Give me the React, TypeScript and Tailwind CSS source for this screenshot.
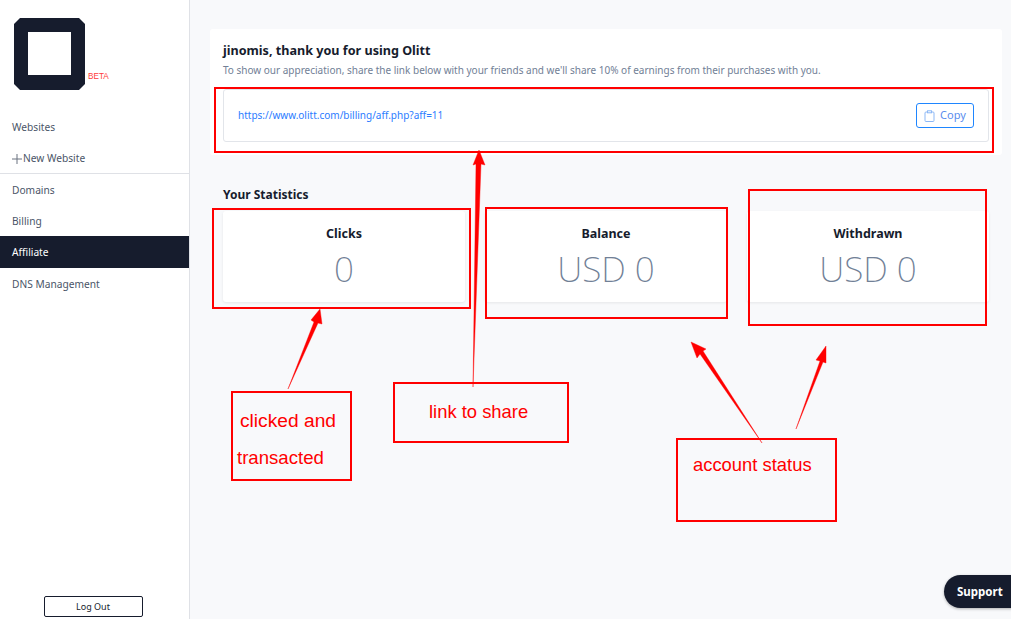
import React from "react";

const font = { fontFamily: '"Noto Sans", sans-serif' };

function Arrow({ points }: { points: string }) {
  return <polygon points={points} fill="#ff0000" stroke="#ff0000" strokeWidth="0.4" />;
}

function Stat({ title, value }: { title: string; value: string }) {
  return (
    <div className="h-[91px] rounded-[3px] bg-white shadow-[0_1px_3px_rgba(0,0,0,0.08)] flex flex-col items-center">
      <div className="mt-[14px] text-[12.5px] leading-[18px] font-bold text-[#161c2d]">{title}</div>
      <div className="mt-[2px] text-[35px] leading-[48px] font-extralight text-[#718096]">{value}</div>
    </div>
  );
}

function NavItem({ children, active, short }: { children: React.ReactNode; active?: boolean; short?: boolean }) {
  return (
    <div
      className={
        (short ? "h-[31px] " : "h-[32px] ") +
        "flex items-center pl-[12px] pt-[2px] text-[10.2px] " +
        (active ? "bg-[#161c2d] text-white" : "text-[#4a5568]")
      }
    >
      {children}
    </div>
  );
}

export default function App() {
  return (
    <div style={font} className="relative flex h-[619px] w-[1011px] overflow-hidden bg-[#f8f9fb]">
      <aside className="flex h-full w-[190px] shrink-0 flex-col border-r border-[#dfe1e6] bg-white">
        <div className="flex h-[111px] items-start pl-[14px] pt-[18px]">
          <svg width="72" height="72" viewBox="0 0 72 72">
            <polygon points="6,0 65,0 71,6 71,66 65,72 6,72 0,66 0,6" fill="#161c2d" />
            <rect x="14" y="14" width="43" height="43" fill="#ffffff" />
          </svg>
          <span
            style={{ fontFamily: '"Liberation Sans", sans-serif' }}
            className="mt-[54px] ml-[2px] text-[8.2px] leading-[10px] text-[#ff3b3b]"
          >
            BETA
          </span>
        </div>
        <NavItem>Websites</NavItem>
        <div className="h-[31px] flex items-center pl-[12px] pt-[2px] text-[10.2px] text-[#4a5568] border-b border-[#dfe1e6]">
          <svg width="10" height="10" viewBox="0 0 10 10" className="mr-[1px]">
            <path d="M5 0v10M0 5h10" stroke="#6b7280" strokeWidth="1" />
          </svg>
          New Website
        </div>
        <NavItem short>Domains</NavItem>
        <NavItem short>Billing</NavItem>
        <NavItem active>Affiliate</NavItem>
        <NavItem>DNS Management</NavItem>
        <div className="mt-auto mb-[2px] flex justify-center pr-[3px]">
          <button className="h-[21px] w-[99px] rounded-[2px] border border-[#161c2d] bg-white text-[9px] text-[#161c2d]">
            Log Out
          </button>
        </div>
      </aside>

      <main className="flex-1 pl-[20px] pr-[9px] pt-[29px]">
        <section className="h-[126px] rounded-[3px] bg-white px-[13px] pt-[13px]">
          <h1 className="text-[12.6px] leading-[18px] font-bold text-[#161c2d]">jinomis, thank you for using Olitt</h1>
          <p className="mt-[3px] text-[10px] leading-[14px] text-[#718096]">
            To show our appreciation, share the link below with your friends and we'll share 10% of earnings from their
            purchases with you.
          </p>
          <div className="mt-[12px] flex h-[53px] items-center justify-between rounded-[3px] border border-[#e2e5ea] pl-[14px] pr-[14px]">
            <a className="text-[10px] text-[#2b7cff]">https://www.olitt.com/billing/aff.php?aff=11</a>
            <button className="flex h-[25px] w-[58px] items-center justify-center gap-[5px] rounded-[3px] border border-[#1f86ff] text-[11px] text-[#5a8dee]">
              <svg width="11" height="12" viewBox="0 0 11 12" fill="none" stroke="#8db8f5" strokeWidth="1">
                <rect x="1" y="2" width="9" height="9.5" rx="1" />
                <rect x="3.5" y="0.8" width="4" height="2" fill="#ffffff" />
              </svg>
              Copy
            </button>
          </div>
        </section>

        <h2 className="ml-[13px] mt-[31px] text-[12px] leading-[18px] font-bold text-[#161c2d]">Your Statistics</h2>
        <div className="ml-[13px] mr-[13px] mt-[7px] grid grid-cols-3 gap-[20px]">
          <Stat title="Clicks" value="0" />
          <Stat title="Balance" value="USD 0" />
          <Stat title="Withdrawn" value="USD 0" />
        </div>
      </main>

      {/* Red annotations drawn over the screenshot */}
      <div className="absolute left-[214px] top-[87px] h-[66px] w-[780px] border-2 border-[#ff0000]" />
      <div className="absolute left-[212px] top-[208px] h-[101px] w-[259px] border-2 border-[#ff0000]" />
      <div className="absolute left-[485px] top-[207px] h-[112px] w-[243px] border-2 border-[#ff0000]" />
      <div className="absolute left-[748px] top-[189px] h-[137px] w-[239px] border-2 border-[#ff0000]" />

      <div
        style={{ fontFamily: '"Liberation Sans", sans-serif' }}
        className="absolute left-[231px] top-[391px] h-[90px] w-[121px] border-2 border-[#ff0000] text-[18.6px] leading-[37px] text-[#ff0000]"
      >
        <div className="pl-[7px] pt-[9px] text-[19.2px]">clicked and</div>
        <div className="pl-[4px]">transacted</div>
      </div>
      <div
        style={{ fontFamily: '"Liberation Sans", sans-serif' }}
        className="absolute left-[393px] top-[382px] h-[61px] w-[176px] border-2 border-[#ff0000] pl-[34px] pt-[14px] text-[18.4px] leading-[28px] text-[#ff0000]"
      >
        link to share
      </div>
      <div
        style={{ fontFamily: '"Liberation Sans", sans-serif' }}
        className="absolute left-[676px] top-[438px] h-[84px] w-[161px] border-2 border-[#ff0000] pl-[15px] pt-[13px] text-[18.4px] leading-[24px] text-[#ff0000]"
      >
        account status
      </div>

      <svg className="pointer-events-none absolute left-0 top-0" width="1011" height="619">
        <Arrow points="288,389 314,322 311,320 320,309 322,324 318,323" />
        <Arrow points="473,387 476,164 473,165 479,150 485,165 481,164" />
        <Arrow points="762,443 700,354 697,358 691,342 706,349 703,351" />
        <Arrow points="796,429 820,361 816,360 826,346 826,363 823,362" />
      </svg>

      <div className="absolute left-[944px] top-[575px] flex h-[33px] w-[90px] items-center rounded-full bg-[#161c2d] pl-[13px] text-[11.5px] font-bold text-white shadow-[0_1px_3px_rgba(0,0,0,0.3)]">
        Support
      </div>
    </div>
  );
}
